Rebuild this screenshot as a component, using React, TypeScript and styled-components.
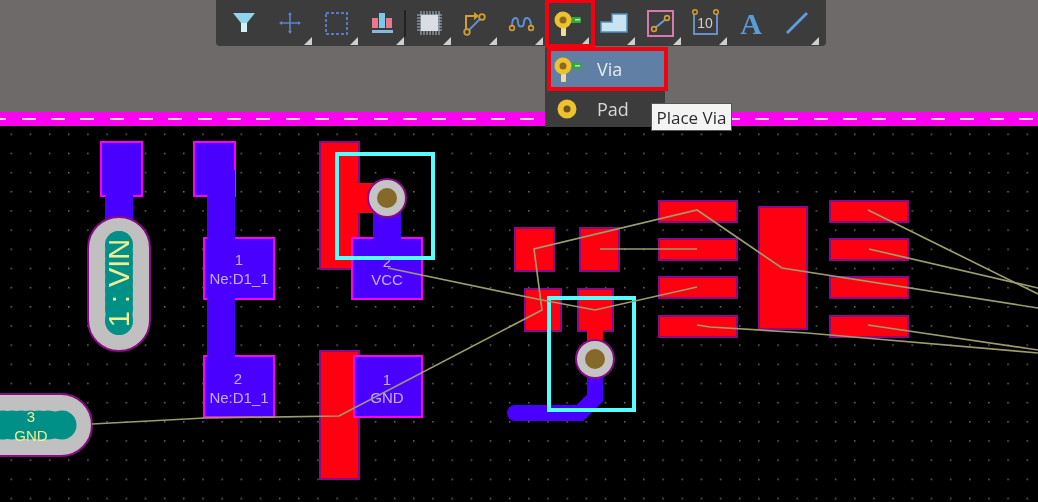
import React from 'react'

import { createGlobalStyle, styled } from 'styled-components'

const GlobalStyle = createGlobalStyle`
  html, body {
    margin: 0;
    padding: 0;
    background: #000;
  }
`

const Page = styled.div`
  width: 1038px;
  height: 502px;
  display: flex;
  flex-direction: column;
  overflow: hidden;
  font-family: "Open Sans", "Liberation Sans", sans-serif;
  filter: blur(0.6px);
`

const TopBand = styled.div`
  height: 112px;
  flex: none;
  padding-left: 216px;
  background: #6e6a69;
  position: relative;
  z-index: 2;
`

const Toolbar = styled.div`
  display: inline-flex;
  align-items: center;
  height: 46px;
  padding: 0 6px 0 5px;
  box-sizing: border-box;
  background: #3c3c3c;
  border-radius: 0 0 4px 4px;
`

const ToolButton = styled.div<{ $arrow?: boolean; $active?: boolean }>`
  position: relative;
  width: 46px;
  height: 46px;
  flex: none;
  display: flex;
  align-items: center;
  justify-content: center;

  &::before {
    content: '';
    display: ${p => (p.$arrow ? 'block' : 'none')};
    position: absolute;
    right: 1px;
    bottom: 1px;
    border-style: solid;
    border-width: 0 0 8px 8px;
    border-color: transparent transparent #cfcfcf transparent;
  }

  &::after {
    content: '';
    display: ${p => (p.$active ? 'block' : 'none')};
    position: absolute;
    top: -1px;
    left: 1px;
    right: -5px;
    bottom: -2px;
    border: 4px solid #f5000f;
  }
`

const Divider = styled.div`
  width: 2px;
  height: 27px;
  flex: none;
  margin-left: -1px;
  background: #222;
`

const Dropdown = styled.div`
  position: absolute;
  top: 47px;
  left: 1px;
  width: 120px;
  height: 80px;
  background: #3c3c3c;
  display: flex;
  flex-direction: column;
`

const MenuRow = styled.div<{ $selected?: boolean }>`
  display: flex;
  align-items: center;
  gap: 14px;
  box-sizing: border-box;
  flex: none;
  height: ${p => (p.$selected ? '44px' : '36px')};
  width: ${p => (p.$selected ? '121px' : '120px')};
  margin-left: ${p => (p.$selected ? '2px' : '0')};
  padding-left: ${p => (p.$selected ? '0' : '6px')};
  background: ${p => (p.$selected ? '#5f7fa5' : 'transparent')};
  border: ${p => (p.$selected ? '4px solid #f5000f' : 'none')};
  color: ${p => (p.$selected ? '#e6ebf2' : '#d8d8d8')};
  font-size: 18px;
`

const Tooltip = styled.div`
  position: absolute;
  left: 106px;
  top: 56px;
  width: 81px;
  height: 28px;
  box-sizing: border-box;
  display: flex;
  align-items: center;
  justify-content: center;
  background: #f4f4f4;
  border: 1px solid #555;
  color: #2c2c2c;
  font-size: 17px;
  white-space: nowrap;
`

const BoardEdge = styled.div`
  height: 14px;
  flex: none;
  background-color: #ff00f0;
  background-image: repeating-linear-gradient(90deg, #ecdcec 0 14px, transparent 14px 29.33px);
  background-size: 1100px 2px;
  background-position: -7.67px 6px;
  background-repeat: no-repeat;
`

const Board = styled.svg`
  display: block;
  flex: 1;
  width: 1038px;
  background: #000;
`

const Icon = styled.svg`
  width: 32px;
  height: 32px;
  flex: none;
  display: block;
`

const copper = {
  top: { fill: '#ff0010', stroke: '#8b0b86' },
  bottom: { fill: '#4a00ff', stroke: '#ff00f0' },
}

const CopperPad = styled.rect<{ $layer: 'top' | 'bottom' }>`
  fill: ${p => copper[p.$layer].fill};
  stroke: ${p => copper[p.$layer].stroke};
  stroke-width: 2px;
`

const Track = styled.path<{ $layer: 'top' | 'bottom'; $width: number }>`
  fill: none;
  stroke: ${p => copper[p.$layer].fill};
  stroke-width: ${p => p.$width}px;
`

const Selection = styled.rect`
  fill: none;
  stroke: #55ffff;
  stroke-width: 4px;
`

const Ratsnest = styled.polyline`
  fill: none;
  stroke: #9c9c6c;
  stroke-width: 1.7px;
`

const PadLabel = styled.text<{ $yellow?: boolean; $size?: number }>`
  fill: ${p => (p.$yellow ? '#f0ee90' : '#c0b0ff')};
  font-family: "Liberation Sans", sans-serif;
  font-size: ${p => p.$size ?? 15}px;
  text-anchor: middle;
`

const IconText = styled.text<{ $size: number; $color: string; $serif?: boolean }>`
  fill: ${p => p.$color};
  font-family: ${p => (p.$serif ? '"Liberation Serif", serif' : '"Liberation Sans", sans-serif')};
  font-weight: ${p => (p.$serif ? 700 : 400)};
  font-size: ${p => p.$size}px;
  text-anchor: middle;
`

const Teal = styled.g`
  fill: #009088;
`

function ViaIcon() {
  return (
    <Icon viewBox="0 0 32 32">
      <rect x="10" y="19" width="5" height="10" rx="1" fill="#f0dc9c" />
      <rect x="20" y="10" width="10" height="6" rx="1" fill="#2fa83c" />
      <rect x="24" y="12" width="5" height="1.5" fill="#b8e8b8" />
      <circle cx="12" cy="13" r="6" fill="#8a6a20" stroke="#eec22e" strokeWidth="5" />
    </Icon>
  )
}

function PadIcon() {
  return (
    <Icon viewBox="0 0 32 32">
      <circle cx="16" cy="16" r="6.5" fill="#6a5420" stroke="#eec22e" strokeWidth="6" />
    </Icon>
  )
}

const vias = [
  { cx: 387, cy: 198 },
  { cx: 595, cy: 359 },
]

const padLabels = [
  { x: 239, y: 265, text: '1' },
  { x: 239, y: 284, text: 'Ne:D1_1' },
  { x: 238, y: 384, text: '2' },
  { x: 239, y: 403, text: 'Ne:D1_1' },
  { x: 387, y: 267, text: '2' },
  { x: 387, y: 285, text: 'VCC' },
  { x: 387, y: 385, text: '1' },
  { x: 387, y: 403, text: 'GND' },
]

const topPads = [
  { x: 320, y: 142, w: 39, h: 127 },
  { x: 320, y: 351, w: 39, h: 128 },
  { x: 515, y: 228, w: 39, h: 43 },
  { x: 580, y: 228, w: 39, h: 43 },
  { x: 525, y: 289, w: 36, h: 42 },
  { x: 578, y: 289, w: 35, h: 42 },
  { x: 759, y: 207, w: 48, h: 122 },
  ...[201, 239, 277, 316].flatMap(y => [
    { x: 659, y, w: 78, h: 21 },
    { x: 830, y, w: 78, h: 21 },
  ]),
]

const bottomPads = [
  { x: 101, y: 142, w: 41, h: 54 },
  { x: 194, y: 142, w: 41, h: 54 },
  { x: 204, y: 238, w: 70, h: 61 },
  { x: 204, y: 356, w: 70, h: 61 },
  { x: 352, y: 238, w: 70, h: 61 },
  { x: 354, y: 356, w: 68, h: 61 },
]

const ratsnest = [
  '92,424 205,418 339,416 542,310 534,249 697,210 782,268 1038,308',
  '600,249 697,249',
  '388,268 542,300 595,310 697,287',
  '697,325 710,327 807,333 1038,353',
  '868,210 1038,294',
  '869,249 1038,288',
  '868,325 1038,350',
]

// the thermal relief in the through-hole pads has a slightly scalloped edge
const vinBumps = [245, 254, 263, 272, 281, 290, 299, 308, 321]
const gndBumps = [-6, 3, 12, 21, 30, 39, 48, 62]

export default function App() {
  return (
    <>
      <GlobalStyle />
      <Page>
        <TopBand>
          <Toolbar>
            <ToolButton>
              <Icon viewBox="0 0 32 32">
                <polygon points="5,6 27,6 19,16 13,16" fill="#8fd6ec" />
                <polygon points="13,16 19,16 19,25 13,25" fill="#d2f1f8" />
              </Icon>
            </ToolButton>
            <ToolButton $arrow>
              <Icon viewBox="0 0 32 32">
                <path d="M16 6v20M6 16h20" stroke="#5f82c8" strokeWidth="1.6" />
                <path d="M14 8l2-3 2 3zM14 24l2 3 2-3zM8 14l-3 2 3 2zM24 14l3 2-3 2z" fill="#5f82c8" />
              </Icon>
            </ToolButton>
            <ToolButton $arrow>
              <Icon viewBox="0 0 32 32">
                <rect x="6" y="6" width="21" height="21" fill="none" stroke="#5a78c8" strokeWidth="2" strokeDasharray="3 2" />
              </Icon>
            </ToolButton>
            <ToolButton $arrow>
              <Icon viewBox="0 0 32 32">
                <rect x="6" y="11" width="6" height="10" fill="#e8788c" />
                <rect x="13" y="6" width="6" height="15" fill="#7cc8e8" />
                <rect x="20" y="11" width="6" height="10" fill="#e8788c" />
                <rect x="6" y="23" width="21" height="3" fill="#88b8e0" />
              </Icon>
            </ToolButton>
            <Divider />
            <ToolButton $arrow>
              <Icon viewBox="0 0 32 32">
                <path d="M8 4v24M11 4v24M14 4v24M17 4v24M20 4v24M23 4v24M26 4v24M4 8h25M4 11h25M4 14h25M4 17h25M4 20h25M4 23h25" stroke="#a8bcc8" strokeWidth="1" />
                <rect x="8" y="8" width="17" height="16" fill="#d8dee4" />
              </Icon>
            </ToolButton>
            <ToolButton $arrow>
              <Icon viewBox="0 0 32 32">
                <path d="M7 22V9h9" fill="none" stroke="#d39f2c" strokeWidth="2" />
                <path d="M15 5l5 4-5 4z" fill="#d39f2c" />
                <path d="M10 23l11-11" stroke="#5f8fd0" strokeWidth="2" />
                <circle cx="8" cy="25" r="2.8" fill="none" stroke="#d39f2c" strokeWidth="1.8" />
                <circle cx="23" cy="10" r="2.8" fill="none" stroke="#d39f2c" strokeWidth="1.8" />
              </Icon>
            </ToolButton>
            <ToolButton $arrow>
              <Icon viewBox="0 0 32 32">
                <path d="M7 19C7 9 13 9 13 15C13 21 19 21 19 15C19 9 26 9 26 19" fill="none" stroke="#5f8fd0" strokeWidth="2" />
                <circle cx="7" cy="21" r="2.4" fill="none" stroke="#d39f2c" strokeWidth="1.6" />
                <circle cx="26" cy="21" r="2.4" fill="none" stroke="#d39f2c" strokeWidth="1.6" />
              </Icon>
            </ToolButton>
            <ToolButton $arrow $active>
              <ViaIcon />
              <Dropdown>
                <MenuRow $selected>
                  <ViaIcon />
                  Via
                </MenuRow>
                <MenuRow>
                  <PadIcon />
                  Pad
                </MenuRow>
                <Tooltip>Place Via</Tooltip>
              </Dropdown>
            </ToolButton>
            <ToolButton $arrow>
              <Icon viewBox="0 0 32 32">
                <path d="M4 25V15H15V7H30V25Z" fill="#c8e4f0" stroke="#5090c0" strokeWidth="1.5" />
              </Icon>
            </ToolButton>
            <ToolButton $arrow>
              <Icon viewBox="0 0 32 32">
                <rect x="5" y="4" width="25" height="25" fill="none" stroke="#d878b0" strokeWidth="2" />
                <path d="M12 21l11-9" stroke="#6a9ad8" strokeWidth="2" />
                <circle cx="11" cy="22" r="2.4" fill="#3c3c3c" stroke="#d39f2c" strokeWidth="1.6" />
                <circle cx="24" cy="11" r="2.4" fill="#3c3c3c" stroke="#d39f2c" strokeWidth="1.6" />
              </Icon>
            </ToolButton>
            <ToolButton $arrow>
              <Icon viewBox="0 0 32 32">
                <path d="M5 6V27H28V6" fill="none" stroke="#6a8cc8" strokeWidth="2" />
                <circle cx="6" cy="5" r="2.3" fill="#3c3c3c" stroke="#d39f2c" strokeWidth="1.5" />
                <circle cx="27" cy="5" r="2.3" fill="#3c3c3c" stroke="#d39f2c" strokeWidth="1.5" />
                <IconText x="16" y="21" $size={14} $color="#cfcfcf">10</IconText>
              </Icon>
            </ToolButton>
            <ToolButton>
              <Icon viewBox="0 0 32 32">
                <IconText x="16" y="27" $size={30} $color="#5b9bd8" $serif>A</IconText>
              </Icon>
            </ToolButton>
            <ToolButton $arrow>
              <Icon viewBox="0 0 32 32">
                <path d="M6 26L26 6" stroke="#5e9ce0" strokeWidth="3" />
              </Icon>
            </ToolButton>
          </Toolbar>
        </TopBand>
        <BoardEdge />
        <Board viewBox="0 126 1038 376">
          <defs>
            <pattern id="grid" x="10.5" y="133.5" width="19.17" height="19.17" patternUnits="userSpaceOnUse">
              <rect width="1.5" height="1.5" fill="#6e6e6e" />
            </pattern>
          </defs>
          <rect x="0" y="126" width="1038" height="376" fill="url(#grid)" />

          {topPads.map(p => (
            <CopperPad key={`${p.x}-${p.y}`} $layer="top" x={p.x} y={p.y} width={p.w} height={p.h} />
          ))}
          <Track $layer="top" $width={30} d="M357 198H380" />
          <Track $layer="top" $width={16} d="M595 330V345" />

          {bottomPads.map(p => (
            <CopperPad key={`${p.x}-${p.y}`} $layer="bottom" x={p.x} y={p.y} width={p.w} height={p.h} />
          ))}
          <Track $layer="bottom" $width={28} d="M119 195V224" />
          <Track $layer="bottom" $width={28} d="M221 170V365" />
          <Track $layer="bottom" $width={28} d="M387 200V240" />
          <Track $layer="bottom" $width={16} strokeLinecap="round" d="M595 365V398L580 413H515" />

          <rect x="88" y="217" width="62" height="134" rx="31" fill="#c0c0c0" stroke="#8b0b86" strokeWidth="2" />
          <rect x="-60" y="394" width="152" height="62" rx="31" fill="#c0c0c0" stroke="#8b0b86" strokeWidth="2" />
          <Teal>
            <rect x="105.5" y="231" width="27" height="104" rx="13.5" />
            {vinBumps.map(y => (
              <circle key={y} cx="119" cy={y} r="14" />
            ))}
            <rect x="-40" y="411.5" width="116" height="27" rx="13.5" />
            {gndBumps.map(x => (
              <circle key={x} cx={x} cy="425" r="14.5" />
            ))}
          </Teal>

          {vias.map(v => (
            <g key={v.cx}>
              <circle cx={v.cx} cy={v.cy} r="20" fill="#8b0b86" />
              <circle cx={v.cx} cy={v.cy} r="18" fill="#c4c4c4" />
              <circle cx={v.cx} cy={v.cy} r="10" fill="#85692a" />
            </g>
          ))}

          <Selection x="337" y="154" width="96" height="104" />
          <Selection x="549" y="298" width="85" height="112" />

          {padLabels.map(l => (
            <PadLabel key={`${l.x}-${l.y}`} x={l.x} y={l.y}>{l.text}</PadLabel>
          ))}
          <PadLabel $yellow $size={29} transform="translate(129 283) rotate(-90)">1 : VIN</PadLabel>
          <PadLabel $yellow x="31" y="422">3</PadLabel>
          <PadLabel $yellow x="31" y="441">GND</PadLabel>

          {ratsnest.map(points => (
            <Ratsnest key={points} points={points} />
          ))}
        </Board>
      </Page>
    </>
  )
}
